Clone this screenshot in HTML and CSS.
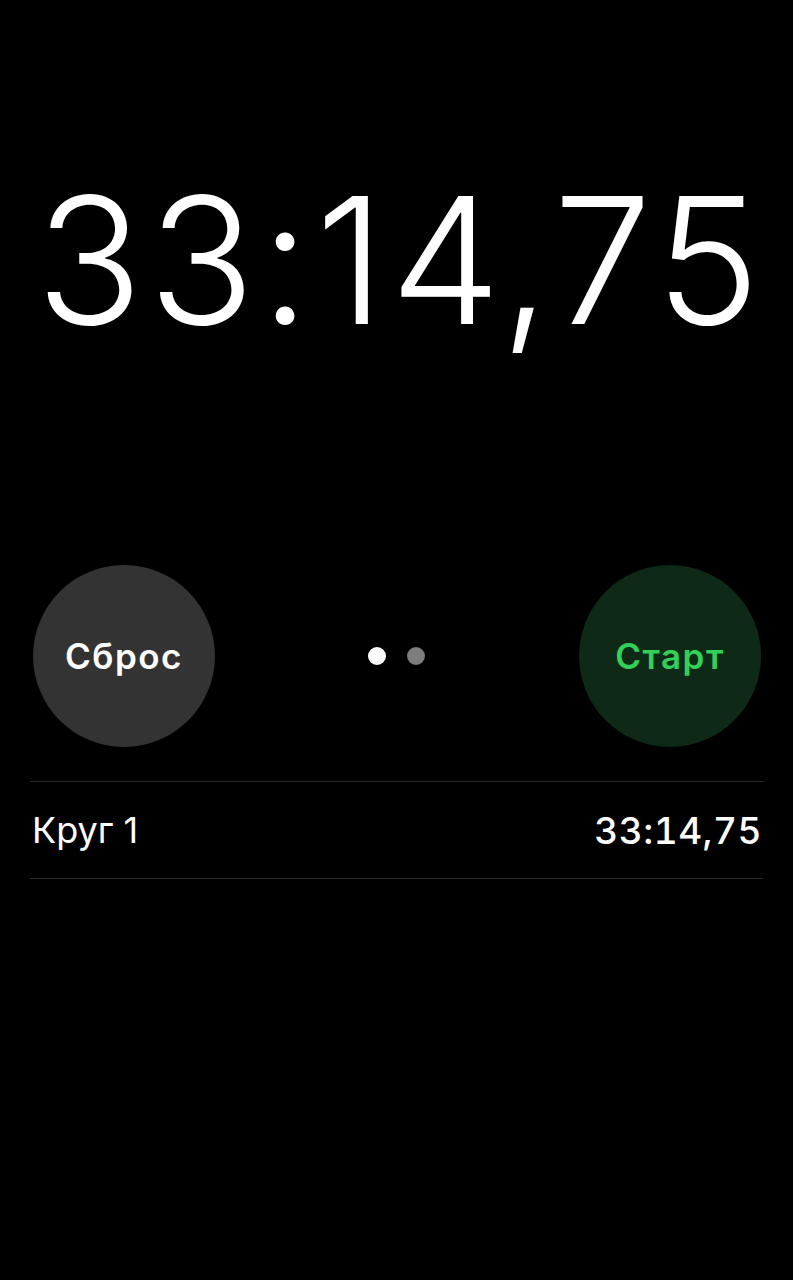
FILE: index.html
```html
<!DOCTYPE html>
<html lang="ru">
<head>
<meta charset="utf-8">
<title>Секундомер</title>
<link rel="stylesheet" href="styles.css">
</head>
<body>
<main class="stopwatch">
  <div class="display">33:14,75</div>
  <div class="controls">
    <button class="btn btn-reset">Сброс</button>
    <div class="dots">
      <span class="dot dot-active"></span>
      <span class="dot"></span>
    </div>
    <button class="btn btn-start">Старт</button>
  </div>
  <ul class="laps">
    <li class="lap">
      <span class="lap-name">Круг 1</span>
      <span class="lap-time">33:14,75</span>
    </li>
  </ul>
</main>
</body>
</html>
```

FILE: styles.css
```css
html, body {
  margin: 0;
  padding: 0;
  background: #000;
}
body {
  width: 793px;
  height: 1280px;
  font-family: Inter, "Noto Sans", sans-serif;
  color: #fff;
}
.stopwatch {
  display: flex;
  flex-direction: column;
  padding: 0 30px;
}
.display {
  margin-top: 160px;
  padding-left: 6px;
  font-size: 176px;
  font-weight: 300;
  line-height: 200px;
  text-align: center;
  letter-spacing: 5.5px;
}
.controls {
  margin-top: 205px;
  display: flex;
  align-items: center;
  justify-content: space-between;
  padding: 0 2px 0 3px;
}
.btn {
  width: 182px;
  height: 182px;
  border-radius: 50%;
  border: none;
  font-family: Inter, "Noto Sans", sans-serif;
  font-size: 35px;
  font-weight: 600;
  letter-spacing: 1.5px;
  padding: 0;
}
.btn-reset {
  background: #333333;
  color: #fff;
}
.btn-start {
  background: #0e2a16;
  color: #30d158;
}
.dots {
  display: flex;
  gap: 21px;
  margin-right: 2px;
}
.dot {
  width: 18px;
  height: 18px;
  border-radius: 50%;
  background: #7d7d7d;
}
.dot-active {
  background: #fff;
}
.laps {
  list-style: none;
  margin: 34px 0 0;
  padding: 0;
  border-top: 1px solid #2a2a2a;
}
.lap {
  display: flex;
  justify-content: space-between;
  align-items: center;
  height: 96px;
  border-bottom: 1px solid #2a2a2a;
  font-size: 36px;
  padding: 0 1px 0 2px;
}
.lap-time {
  font-size: 37px;
  font-weight: 500;
  letter-spacing: 0.5px;
  font-variant-numeric: tabular-nums;
}
```
